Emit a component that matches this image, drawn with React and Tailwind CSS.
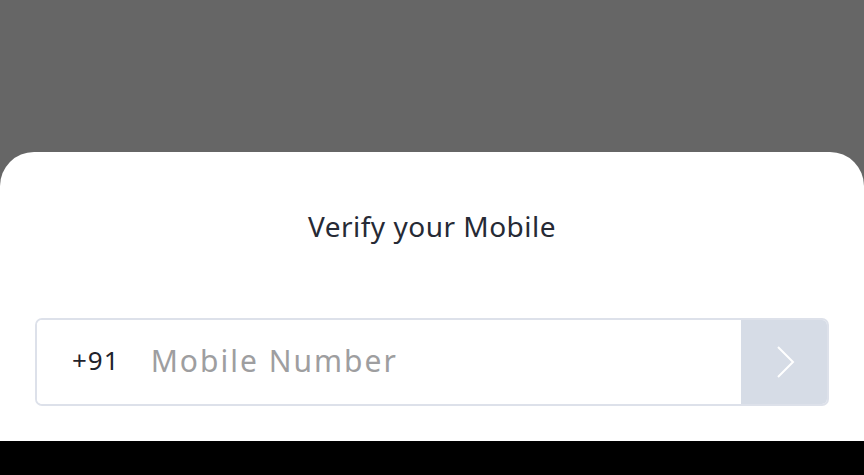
export default function App() {
  return (
    <div className="flex h-[475px] w-[864px] flex-col bg-[#666666] font-['Noto_Sans',sans-serif]">
      <div className="h-[152px] shrink-0" />
      <div className="flex flex-1 flex-col rounded-t-[34px] bg-white px-[35px]">
        <h1 className="mt-[54px] text-center text-[28px] leading-[40px] tracking-[0.5px] text-[#262a35]">
          Verify your Mobile
        </h1>
        <div className="mt-[72px] flex h-[88px] overflow-hidden rounded-[7px] border-2 border-[#dde1ea]">
          <div className="flex flex-1 items-center bg-white pb-[3px]">
            <span className="ml-[35px] text-[26px] tracking-[1px] text-[#1f232c]">+91</span>
            <span className="ml-[31px] text-[30px] tracking-[2px] text-[#9e9ea0]">
              Mobile Number
            </span>
          </div>
          <div className="flex w-[86px] items-center justify-center bg-[#d6dce6] pl-[4px]">
            <svg width="22" height="34" viewBox="0 0 22 34" fill="none">
              <path d="M3 2 L18 17 L3 32" stroke="white" strokeWidth="2" />
            </svg>
          </div>
        </div>
      </div>
      <div className="h-[34px] shrink-0 bg-black" />
    </div>
  );
}
